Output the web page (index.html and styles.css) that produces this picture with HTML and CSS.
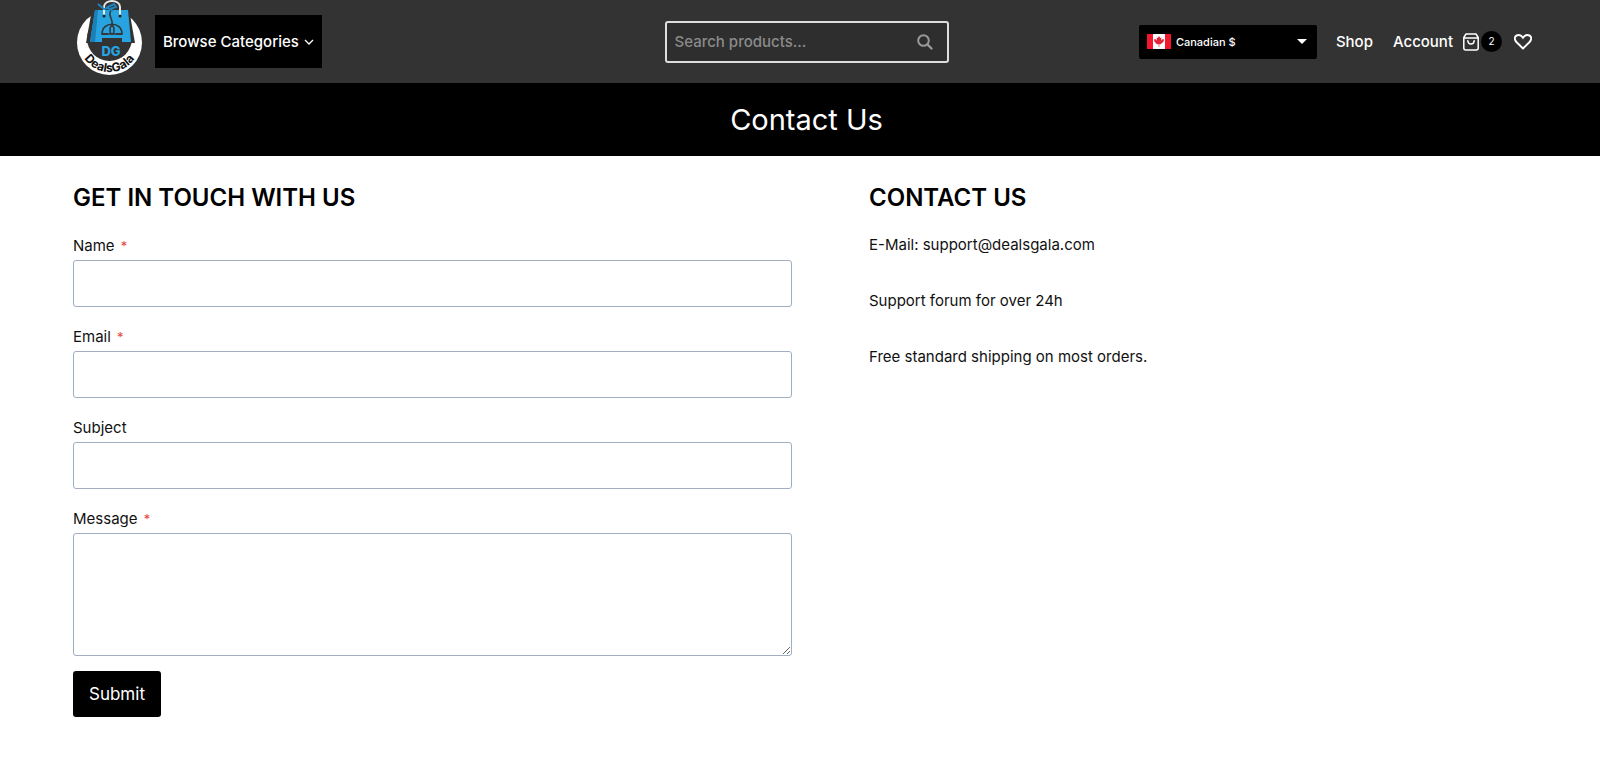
FILE: index.html
```
<!DOCTYPE html>
<html lang="en">
<head>
    <meta charset="utf-8">
    <meta name="viewport" content="width=device-width, initial-scale=1.0">
    <title>Contact Us - DealsGala</title>
    <link rel="stylesheet" href="styles.css">
</head>
<body>
    <header class="header">
        <div class="header-left">
            <a href="#" class="logo" aria-label="DealsGala">
                <svg width="70" height="76" viewBox="0 0 70 76">
                    <defs>
                        <path id="logoArc" d="M4.500 46 A30.300 30.300 0 0 0 64.500 46"/>
                    </defs>
                    <circle cx="34.500" cy="42.500" r="32.500" fill="#fff"/>
                    <circle cx="34.500" cy="38.500" r="22.500" fill="#333"/>
                    <path d="M17 9H54L60 43H11Z" fill="#333"/>
                    <path d="M20 10H53L56 42H47V38H27V42H15Z" fill="#27a3e0"/>
                    <path d="M20 10L15 42H20L23 10Z" fill="#1b7fb8"/>
                    <path d="M27 34c0-13 20-13 20 0Z" fill="#27a3e0" stroke="#333" stroke-width="1.500"/>
                    <path d="M36 10c-4 7 3 8 1 16M27 34H33M41 34H47" fill="none" stroke="#333" stroke-width="1.500"/>
                    <ellipse cx="37" cy="30" rx="2" ry="4" fill="#27a3e0" stroke="#333" stroke-width="1.500"/>
                    <path d="M29 16V7c0-8 16-8 16 0v9" fill="none" stroke="#e8e8e8" stroke-width="2"/>
                    <path d="M23 4l6 5 4-1 5 3M31 8l8-4 2 3-6 2" fill="none" stroke="#1c84bd" stroke-width="2"/>
                    <circle cx="29" cy="16" r="1.500" fill="#222"/>
                    <circle cx="45" cy="16" r="1.500" fill="#222"/>
                    <text x="36" y="56" class="logo-initials">DG</text>
                    <text class="logo-name"><textPath href="#logoArc" startOffset="50%">DealsGala</textPath></text>
                </svg>
            </a>
            <button type="button" class="browse">Browse Categories
                <svg width="10" height="6" viewBox="0 0 10 6"><path d="M1 1l4 4 4-4" fill="none" stroke="#fff" stroke-width="1.300"/></svg>
            </button>
        </div>

        <form class="search">
            <input type="search" placeholder="Search products..." aria-label="Search products">
            <button type="submit" aria-label="Search">
                <svg width="16" height="16" viewBox="0 0 16 16"><circle cx="6.500" cy="6.500" r="5.300" fill="none" stroke="#999" stroke-width="2"/><path d="M10.500 10.500l4 4" stroke="#999" stroke-width="2.400" stroke-linecap="round"/></svg>
            </button>
        </form>

        <div class="header-right">
            <div class="currency">
                <svg width="24" height="15" viewBox="0 0 24 15">
                    <path fill="#fff" d="M0 0h24v15H0z"/>
                    <path fill="#f2172f" d="M0 0h6v15H0zM18 0h6v15h-6z"/>
                    <path fill="#e0243a" d="M12 2l1.200 2 1.200-.6-.3 3 1.600-1.400 1.400.6-.5 2-2.900 2.700H12.300V13h-.6v-2.700H9.800L7.400 7.600l-.5-2 1.400-.6 1.600 1.400-.3-3 1.200.6z"/>
                </svg>
                <select aria-label="Currency">
                    <option>Canadian $</option>
                </select>
                <svg width="10" height="5" viewBox="0 0 10 5"><path d="M0 0h10L5 5z" fill="#fff"/></svg>
            </div>
            <nav class="nav">
                <a href="#">Shop</a>
                <a href="#">Account</a>
            </nav>
            <a href="#" class="cart" aria-label="Cart">
                <svg width="16" height="18" viewBox="0 0 16 18" fill="none" stroke="#fff" stroke-width="1.500" stroke-linejoin="round"><path d="M.8 4.500L3 1h10l2.200 3.500V15q0 2-2 2H2.800q-2 0-2-2ZM.8 5h14.400"/><path d="M4.800 7.800c.4 4.300 6 4.300 6.400 0" stroke-linecap="round"/></svg>
                <span class="cart-count">2</span>
            </a>
            <a href="#" class="wishlist" aria-label="Wishlist">
                <svg width="18" height="16" viewBox="0 0 18 16"><path d="M9 14.500L2.400 8C-.8 4.600 1.300 1 4.600 1 6.800 1 8 2.300 9 3.800 10 2.300 11.200 1 13.400 1c3.300 0 5.400 3.600 2.200 7Z" fill="none" stroke="#fff" stroke-width="1.900"/></svg>
            </a>
        </div>
    </header>

    <div class="page-title">
        <h1>Contact Us</h1>
    </div>

    <main class="container">
        <section>
            <h2>GET IN TOUCH WITH US</h2>
            <form class="contact-form">
                <label for="name">Name <span class="required">*</span></label>
                <input type="text" id="name" name="name" required>
                <label for="email">Email <span class="required">*</span></label>
                <input type="email" id="email" name="email" required>
                <label for="subject">Subject</label>
                <input type="text" id="subject" name="subject">
                <label for="message">Message <span class="required">*</span></label>
                <textarea id="message" name="message" required></textarea>
                <button type="submit" class="submit">Submit</button>
            </form>
        </section>
        <section class="info">
            <h2>CONTACT US</h2>
            <p>E-Mail: support@dealsgala.com</p>
            <p>Support forum for over 24h</p>
            <p>Free standard shipping on most orders.</p>
        </section>
    </main>
</body>
</html>
```
FILE: styles.css
```
* {
    box-sizing: border-box;
    margin: 0;
    padding: 0;
}
body {
    background-color: #fff;
    color: #111;
    font-family: Inter, Roboto, sans-serif;
    font-size: 15px;
    line-height: 28px;
}
a {
    color: #fff;
    text-decoration: none;
}
svg {
    display: block;
    flex: none;
}
button, input, select, textarea {
    font-family: inherit;
}
.header {
    background-color: #333;
    display: grid;
    grid-template-columns: 1fr 284px 1fr;
    align-items: center;
    height: 83px;
    padding: 0 60px 0 73px;
}
.header-left {
    display: flex;
    align-items: center;
    gap: 10px;
}
.logo {
    padding: 0 0 7px 2px;
}
.logo-initials {
    fill: #27a3e0;
    font-size: 13px;
    font-weight: 800;
    text-anchor: middle;
}
.logo-name {
    fill: #111;
    font-size: 12px;
    font-weight: 700;
    text-anchor: middle;
}
.browse {
    background-color: #000;
    border: none;
    color: #fff;
    display: flex;
    align-items: center;
    gap: 5px;
    font-size: 15px;
    font-weight: 500;
    height: 53px;
    padding: 0 8px;
}
.search {
    background-color: #2e2e2e;
    border: 2px solid #ddd;
    border-radius: 3px;
    display: flex;
    height: 42px;
}
.search input {
    background: none;
    border: none;
    color: #ccc;
    flex: 1;
    font-size: 15px;
    font-weight: 500;
    min-width: 0;
    padding: 0 8px;
}
.search input::placeholder {
    color: #8b8b8b;
}
.search button {
    background: none;
    border: none;
    padding: 0 14px;
}
.header-right {
    display: flex;
    align-items: center;
    justify-content: flex-end;
}
.currency {
    background-color: #000;
    border-radius: 2px;
    display: flex;
    align-items: center;
    gap: 5px;
    height: 34px;
    padding: 0 10px 0 8px;
    width: 178px;
}
.currency select {
    appearance: none;
    background: none;
    border: none;
    color: #fff;
    flex: 1;
    font-size: 11px;
    font-weight: 500;
}
.nav {
    display: flex;
    gap: 20px;
    font-weight: 500;
    margin-left: 19px;
}
.cart {
    display: flex;
    align-items: center;
    gap: 2px;
    margin-left: 10px;
}
.cart-count {
    background-color: #000;
    border-radius: 50%;
    font-size: 10px;
    height: 21px;
    line-height: 21px;
    text-align: center;
    width: 21px;
}
.wishlist {
    margin: 0 8px 0 12px;
}
.page-title {
    background-color: #000;
    color: #fff;
    padding: 19px 60px 18px 73px;
    text-align: center;
}
.page-title h1 {
    font-size: 29px;
    font-weight: 400;
    line-height: 36px;
}
.container {
    display: grid;
    grid-template-columns: 719fr 671fr;
    column-gap: 77px;
    padding: 24px 60px 48px 73px;
}
h2 {
    color: #000;
    font-size: 24px;
    font-weight: 600;
    line-height: 36px;
    margin-bottom: 16px;
}
.contact-form {
    display: flex;
    flex-direction: column;
    align-items: flex-start;
}
.required {
    color: #e8453c;
    font-size: 13px;
    margin-left: 2px;
}
.contact-form input,
.contact-form textarea {
    background-color: #fff;
    border: 1px solid #a0aec0;
    border-radius: 3px;
    font-size: 15px;
    height: 47px;
    margin-bottom: 16px;
    padding: 8px;
    width: 100%;
}
.contact-form textarea {
    height: 123px;
    margin-bottom: 15px;
    resize: vertical;
}
.submit {
    background-color: #000;
    border: none;
    border-radius: 3px;
    color: #fff;
    font-size: 17px;
    height: 46px;
    padding: 0 16px;
}
.info h2 {
    margin-bottom: 15px;
}
.info p {
    margin-bottom: 28px;
}
```
